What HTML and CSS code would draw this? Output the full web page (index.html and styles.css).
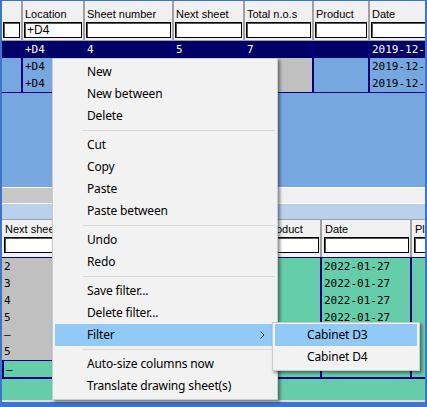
FILE: index.html
```html
<!DOCTYPE html>
<html>
<head>
<meta charset="utf-8">
<title>Sheets</title>
<link rel="stylesheet" href="styles.css">
</head>
<body>
<div class="win">
  <div class="upper">
    <div class="ucols head">
      <div class="hc"><span class="lbl"></span><span class="inp"></span></div>
      <div class="hc"><span class="lbl">Location</span><span class="inp">+D4</span></div>
      <div class="hc"><span class="lbl">Sheet number</span><span class="inp"></span></div>
      <div class="hc"><span class="lbl">Next sheet</span><span class="inp"></span></div>
      <div class="hc"><span class="lbl">Total n.o.s</span><span class="inp"></span></div>
      <div class="hc"><span class="lbl">Product</span><span class="inp"></span></div>
      <div class="hc"><span class="lbl">Date</span><span class="inp"></span></div>
    </div>
    <div class="urows">
      <div class="ucols row sel">
        <div class="c"></div><div class="c">+D4</div><div class="c">4</div><div class="c">5</div><div class="c">7</div><div class="c"></div><div class="c">2019-12-10</div>
      </div>
      <div class="ucols row">
        <div class="c"></div><div class="c">+D4</div><div class="c g"></div><div class="c g"></div><div class="c g"></div><div class="c"></div><div class="c">2019-12-10</div>
      </div>
      <div class="ucols row">
        <div class="c"></div><div class="c">+D4</div><div class="c g"></div><div class="c g"></div><div class="c g"></div><div class="c"></div><div class="c">2019-12-10</div>
      </div>
    </div>
  </div>
  <div class="hscroll"><div class="thumb"></div></div>
  <div class="band"></div>
  <div class="lower">
    <div class="lcols head">
      <div class="hc"><span class="lbl">Next sheet</span><span class="inp"></span></div>
      <div class="hc"><span class="lbl"></span><span class="inp"></span></div>
      <div class="hc"><span class="lbl"></span><span class="inp"></span></div>
      <div class="hc"><span class="lbl"></span><span class="inp"></span></div>
      <div class="hc"><span class="lbl">Product</span><span class="inp"></span></div>
      <div class="hc"><span class="lbl">Date</span><span class="inp"></span></div>
      <div class="hc"><span class="lbl">Place</span><span class="inp"></span></div>
    </div>
    <div class="lrows">
      <div class="lcols row"><div class="c g">2</div><div class="c g"></div><div class="c g"></div><div class="c"></div><div class="c"></div><div class="c">2022-01-27</div><div class="c"></div></div>
      <div class="lcols row"><div class="c g">3</div><div class="c g"></div><div class="c g"></div><div class="c"></div><div class="c"></div><div class="c">2022-01-27</div><div class="c"></div></div>
      <div class="lcols row"><div class="c g">4</div><div class="c g"></div><div class="c g"></div><div class="c"></div><div class="c"></div><div class="c">2022-01-27</div><div class="c"></div></div>
      <div class="lcols row"><div class="c g">5</div><div class="c g"></div><div class="c g"></div><div class="c"></div><div class="c"></div><div class="c">2022-01-27</div><div class="c"></div></div>
      <div class="lcols row"><div class="c g">–</div><div class="c g"></div><div class="c g"></div><div class="c"></div><div class="c"></div><div class="c"></div><div class="c"></div></div>
      <div class="lcols row"><div class="c g">5</div><div class="c g"></div><div class="c g"></div><div class="c"></div><div class="c"></div><div class="c"></div><div class="c"></div></div>
      <div class="lcols row cur"><div class="c curc">–</div><div class="c"></div><div class="c"></div><div class="c"></div><div class="c"></div><div class="c"></div><div class="c"></div></div>
    </div>
  </div>
  <div class="foot"></div>
</div>

<div class="menu">
  <div class="mi">New</div>
  <div class="mi">New between</div>
  <div class="mi">Delete</div>
  <div class="ms"></div>
  <div class="mi">Cut</div>
  <div class="mi">Copy</div>
  <div class="mi">Paste</div>
  <div class="mi">Paste between</div>
  <div class="ms"></div>
  <div class="mi">Undo</div>
  <div class="mi">Redo</div>
  <div class="ms"></div>
  <div class="mi">Save filter...</div>
  <div class="mi">Delete filter...</div>
  <div class="mi hl"><span>Filter</span><svg class="chev" width="5" height="8" viewBox="0 0 5 8"><polyline points="0.5,0.5 4,4 0.5,7.5" fill="none" stroke="#333" stroke-width="1"/></svg></div>
  <div class="ms"></div>
  <div class="mi">Auto-size columns now</div>
  <div class="mi">Translate drawing sheet(s)</div>
</div>

<div class="sub">
  <div class="mi hl">Cabinet D3</div>
  <div class="mi">Cabinet D4</div>
</div>
</body>
</html>
```

FILE: styles.css
```css
* { box-sizing: border-box; }
html, body { margin: 0; padding: 0; }
body {
  width: 427px;
  height: 407px;
  overflow: hidden;
  position: relative;
  background: #ffffff;
  font-family: "Liberation Sans", Arial, sans-serif;
}
.win {
  width: 427px;
  height: 407px;
  display: flex;
  flex-direction: column;
  border-style: solid;
  border-color: #3f74c8;
  border-width: 1px 2px 5px 2px;
  background: #f0f0f0;
}
.upper {
  height: 186px;
  flex: none;
  background: #77a7df;
  display: flex;
  flex-direction: column;
  overflow: hidden;
}
.ucols {
  display: grid;
  grid-template-columns: 21px 62px 89px 71px 69px 56px 90px;
}
.lcols {
  display: grid;
  grid-template-columns: 70px 69px 60px 61px 60px 90px 70px;
}
.head { background: #f0f0f0; }
.upper .head {
  height: 40px;
  flex: none;
  border-bottom: 1px solid #a0a0a0;
}
.hc {
  border-right: 2px solid #a0a0a0;
  padding: 6px 1px 0 1px;
  display: flex;
  flex-direction: column;
  overflow: hidden;
  min-width: 0;
}
.lbl {
  height: 14px;
  font-size: 11px;
  line-height: 14px;
  padding-left: 1px;
  white-space: nowrap;
  color: #000;
}
.inp {
  margin-top: 1px;
  height: 16px;
  background: #fff;
  border: 1px solid #000;
  box-shadow: inset 1px 1px 0 #555;
  font-size: 12px;
  line-height: 14px;
  padding-left: 2px;
  white-space: nowrap;
  overflow: hidden;
  color: #000;
}
.row {
  height: 17px;
  font-family: "DejaVu Sans Mono", "Liberation Mono", monospace;
  font-size: 11px;
  line-height: 17px;
  color: #000;
}
.row .c {
  border-right: 2px solid #000080;
  padding-left: 2px;
  white-space: nowrap;
  overflow: hidden;
  min-width: 0;
}
.urows { border-bottom: 1px solid #000080; }
.sel { background: #000066; color: #fff; }
.g { background: #c0c0c0; }

.hscroll {
  height: 17px;
  flex: none;
  background: #f0f0f0;
  border-top: 1px solid #fff;
  border-bottom: 1px solid #fff;
}
.thumb { width: 220px; height: 100%; background: #c8c8c8; }
.band { height: 15px; flex: none; background: #b9d1ea; }
.lower {
  height: 181px;
  flex: none;
  background: #66cdaa;
  display: flex;
  flex-direction: column;
  overflow: hidden;
}
.lower .head {
  height: 38px;
  flex: none;
  border-top: 1px solid #a0a0a0;
}
.lower .hc { padding: 2px 1px 0 2px; }
.lrows { border-top: 1px solid #000080; }
.cur { height: 19px; border-bottom: 2px solid #000080; }
.curc { border-style: solid; border-color: #000080; border-width: 1px 2px 0 2px; }
.foot { height: 2px; flex: none; background: #dcdcdc; }

.menu, .sub {
  position: absolute;
  background: #f2f2f2;
  border: 1px solid #cccccc;
  box-shadow: 2px 2px 3px rgba(0, 0, 0, 0.45);
  font-family: "Noto Sans", "Open Sans", sans-serif;
  font-size: 12px;
  letter-spacing: -0.15px;
  color: #000;
}
.menu { left: 52px; top: 58px; width: 226px; padding: 2px; }
.sub { left: 272px; top: 322px; width: 148px; padding: 1px 2px 2px 2px; }
.mi {
  height: 22px;
  line-height: 22px;
  padding-left: 32px;
  white-space: nowrap;
  display: flex;
  align-items: center;
}
.mi.hl { background: #91c9f7; }
.chev { margin-left: auto; margin-right: 10px; }
.ms {
  height: 7px;
  display: flex;
  align-items: center;
  padding-left: 28px;
}
.ms::after {
  content: "";
  flex: 1;
  height: 1px;
  background: #d7d7d7;
}
```
